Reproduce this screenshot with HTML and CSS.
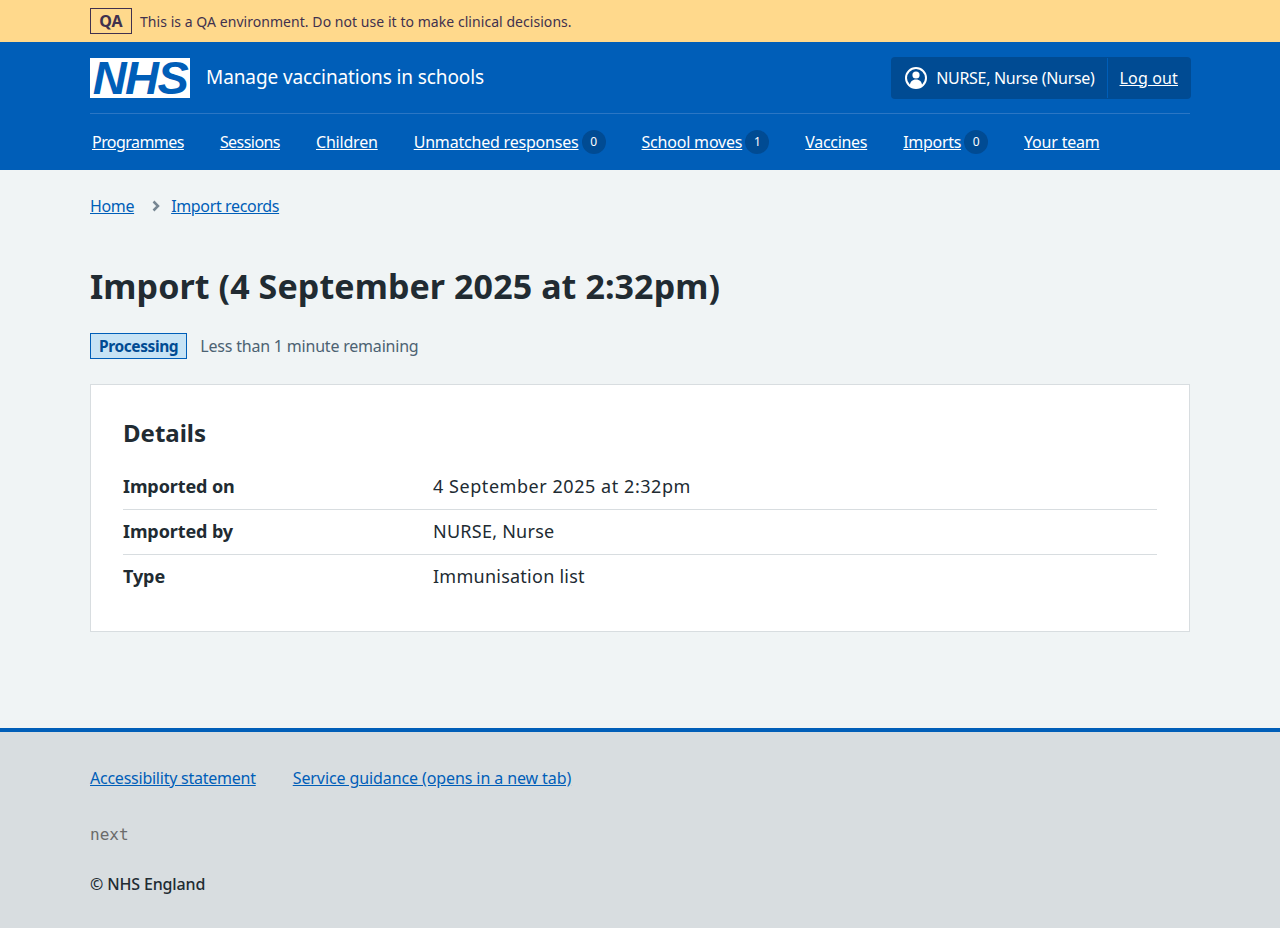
FILE: index.html
```html
<!DOCTYPE html>
<html lang="en">

<head>
    <meta charset="UTF-8">
    <meta name="viewport" content="width=device-width, initial-scale=1.0">
    <title>Import (4 September 2025 at 2:32pm)</title>
    <link rel="stylesheet" href="styles.css">
</head>

<body>
    <div class="env-banner">
        <div class="container env-row">
            <strong class="env-tag">QA</strong>
            <span class="env-text">This is a QA environment. Do not use it to make clinical decisions.</span>
        </div>
    </div>

    <header class="header">
        <div class="container">
            <div class="header-top">
                <a class="logo" href="#"><span class="logo-text">NHS</span></a>
                <span class="service-name">Manage vaccinations in schools</span>
                <div class="account">
                    <div class="account-user">
                        <svg class="account-icon" viewBox="0 0 22 22" width="22" height="22" aria-hidden="true">
                            <circle cx="11" cy="11" r="10" fill="none" stroke="#fff" stroke-width="2"/>
                            <circle cx="11" cy="8" r="3.6" fill="#fff"/>
                            <path d="M4.8 18.5c.3-3.8 2.6-6 6.2-6s5.900 2.200 6.200 6c-1.700 1.600-3.900 2.500-6.200 2.500s-4.500-.9-6.200-2.500z" fill="#fff"/>
                        </svg>
                        <span>NURSE, Nurse (Nurse)</span>
                    </div>
                    <a class="account-link" href="#">Log out</a>
                </div>
            </div>
            <nav class="nav">
                <a class="nav-narrow" href="#">Programmes</a>
                <a class="nav-narrow" href="#">Sessions</a>
                <a class="nav-wide" href="#">Children</a>
                <div class="nav-item"><a class="nav-wide" href="#">Unmatched responses</a><span class="count">0</span></div>
                <div class="nav-item"><a class="nav-wide" href="#">School moves</a><span class="count">1</span></div>
                <a href="#">Vaccines</a>
                <div class="nav-item"><a href="#">Imports</a><span class="count">0</span></div>
                <a class="nav-wide" href="#">Your team</a>
            </nav>
        </div>
    </header>

    <main class="main">
        <div class="container">
            <div class="breadcrumb">
                <a href="#">Home</a>
                <svg class="crumb-arrow" viewBox="0 0 8 12" width="8" height="12" aria-hidden="true">
                    <path d="M1.500 1.500 6 6l-4.500 4.500" fill="none" stroke="#768692" stroke-width="2.500"/>
                </svg>
                <a href="#">Import records</a>
            </div>

            <h1>Import (4 September 2025 at 2:32pm)</h1>

            <div class="status-row">
                <strong class="tag">Processing</strong>
                <span class="status-hint">Less than 1 minute remaining</span>
            </div>

            <section class="card">
                <h2>Details</h2>
                <dl class="summary">
                    <div class="summary-row">
                        <dt>Imported on</dt>
                        <dd class="summary-date">4 September 2025 at 2:32pm</dd>
                    </div>
                    <div class="summary-row">
                        <dt>Imported by</dt>
                        <dd>NURSE, Nurse</dd>
                    </div>
                    <div class="summary-row">
                        <dt>Type</dt>
                        <dd>Immunisation list</dd>
                    </div>
                </dl>
            </section>
        </div>
    </main>

    <footer class="footer">
        <div class="container">
            <div class="footer-links">
                <a href="#">Accessibility statement</a>
                <a href="#">Service guidance (opens in a new tab)</a>
            </div>
            <code class="version">next</code>
            <p class="copyright">© NHS England</p>
        </div>
    </footer>
</body>

</html>
```

FILE: styles.css
```css
body {
    font-family: "Noto Sans", Arial, sans-serif;
    font-size: 17px;
    line-height: 24px;
    margin: 0;
    color: #212b32;
    background-color: #d8dde0;
}

.container {
    width: 1100px;
    margin: 0 auto;
}

/* environment banner */
.env-banner {
    height: 42px;
    background-color: #ffd98c;
    color: #41314e;
    font-size: 14px;
    letter-spacing: 0.05px;
}

.env-row {
    display: flex;
    align-items: center;
    gap: 8px;
    height: 42px;
}

.env-text {
    padding-top: 2px;
}

.env-tag {
    box-sizing: border-box;
    width: 42px;
    height: 26px;
    line-height: 24px;
    text-align: center;
    border: 1px solid #41314e;
    font-size: 16px;
}

/* header */
.header {
    height: 128px;
    background-color: #005eb8;
    color: #fff;
}

.header a {
    color: #fff;
}

.header-top {
    display: flex;
    align-items: center;
    height: 71px;
    border-bottom: 1px solid #2b76c4;
}

.logo {
    display: block;
    width: 100px;
    height: 40px;
    margin-top: 1px;
    background-color: #fff;
    text-decoration: none;
}

.logo-text {
    display: block;
    font-family: "Liberation Sans", Arial, sans-serif;
    font-size: 47px;
    font-weight: bold;
    font-style: italic;
    line-height: 40px;
    letter-spacing: -1.5px;
    text-align: center;
    color: #005eb8;
}

.service-name {
    margin-left: 16px;
    padding-bottom: 2px;
    font-size: 19px;
    letter-spacing: -0.1px;
}

.account {
    display: flex;
    align-items: center;
    height: 42px;
    margin-left: auto;
    margin-right: -1px;
    background-color: #004b93;
    border-radius: 4px;
    font-size: 16px;
}

.account-user {
    display: flex;
    align-items: center;
    gap: 9px;
    height: 40px;
    padding: 0 12px 0 14px;
    border-right: 1px solid #005eb8;
    letter-spacing: -0.3px;
}

.account-icon {
    display: block;
}

.account-link {
    padding: 0 13px 0 12px;
    letter-spacing: 0.15px;
}

.nav {
    display: flex;
    align-items: center;
    gap: 36px;
    height: 56px;
    padding-left: 2px;
    font-size: 16px;
    letter-spacing: -0.3px;
}

.nav-narrow {
    letter-spacing: -0.55px;
}

.nav-wide {
    letter-spacing: -0.2px;
}

.nav-item {
    display: flex;
    align-items: center;
    gap: 3px;
}

.count {
    width: 24px;
    height: 24px;
    line-height: 24px;
    border-radius: 50%;
    background-color: #004b93;
    font-size: 12px;
    text-align: center;
}

/* main */
.main {
    height: 558px;
    background-color: #f0f4f5;
}

.main a {
    color: #005eb8;
}

.breadcrumb {
    display: flex;
    align-items: center;
    padding-top: 24px;
    font-size: 16px;
    letter-spacing: -0.35px;
}

.crumb-arrow {
    margin: 0 11px 0 18px;
}

h1 {
    margin: 46px 0 0;
    font-size: 34px;
    line-height: 44px;
    font-weight: 700;
    letter-spacing: 0.09px;
}

.status-row {
    display: flex;
    align-items: center;
    gap: 13px;
    margin-top: 25px;
    font-size: 16px;
}

.tag {
    box-sizing: border-box;
    height: 26px;
    line-height: 24px;
    padding: 0 8px;
    border: 1px solid #005eb8;
    background-color: #c7e3f5;
    color: #004b93;
    font-size: 15.5px;
    letter-spacing: -0.4px;
}

.status-hint {
    color: #4c6272;
    letter-spacing: -0.2px;
}

.card {
    box-sizing: border-box;
    height: 248px;
    margin-top: 25px;
    padding: 32px;
    background-color: #fff;
    border: 1px solid #d8dde0;
}

h2 {
    margin: 0;
    font-size: 24px;
    line-height: 32px;
    font-weight: 700;
}

.summary {
    margin: 16px 0 0;
}

.summary-row {
    box-sizing: border-box;
    display: flex;
    align-items: center;
    height: 45px;
    padding-bottom: 3px;
    border-bottom: 1px solid #d8dde0;
}

.summary-row:last-child {
    border-bottom-color: transparent;
}

dt {
    width: 310px;
    font-size: 18px;
    font-weight: 700;
    letter-spacing: -0.1px;
}

dd {
    margin: 0;
    font-size: 18px;
    letter-spacing: 0.25px;
}

.summary-date {
    letter-spacing: 0.55px;
}

/* footer */
.footer {
    height: 196px;
    border-top: 4px solid #005eb8;
    box-sizing: border-box;
}

.footer a {
    color: #005eb8;
}

.footer-links {
    display: flex;
    gap: 37px;
    padding-top: 34px;
    font-size: 16px;
    letter-spacing: -0.1px;
}

.footer-links a:first-child {
    letter-spacing: -0.24px;
}

.version {
    display: block;
    margin-top: 33px;
    font-family: "DejaVu Sans Mono", monospace;
    font-size: 16px;
    color: #6b6b6b;
}

.copyright {
    margin: 25px 0 0;
    font-size: 16px;
    font-weight: 500;
    letter-spacing: -0.15px;
}
```
